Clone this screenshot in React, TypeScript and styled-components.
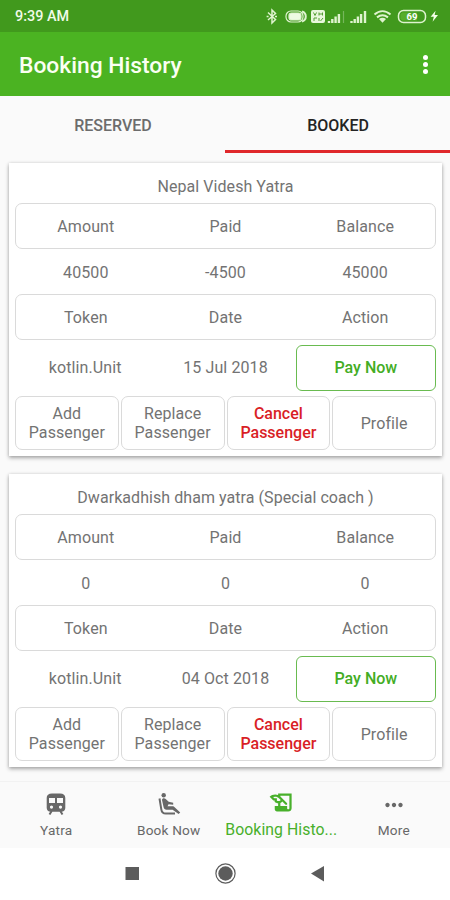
import React from "react";
import styled, { createGlobalStyle } from "styled-components";
import { MdHistoryEdu, MdMoreHoriz } from "react-icons/md";

const GlobalStyle = createGlobalStyle`
  * { box-sizing: border-box; }
  body { margin: 0; background: #fff; font-family: Roboto, "Liberation Sans", sans-serif; }
`;

const Screen = styled.div`
  width: 450px;
  height: 900px;
  display: flex;
  flex-direction: column;
  overflow: hidden;
  background: #fafafa;
  color: #737373;
`;

const StatusBar = styled.div`
  height: 32px;
  flex: none;
  display: flex;
  align-items: center;
  justify-content: space-between;
  padding: 0 9px 0 15px;
  background: #41991d;
  color: #f1fbe8;
`;

const Clock = styled.span`
  font-size: 14.4px;
  font-weight: 500;
  line-height: 16px;
  padding-top: 1px;
`;

const AppBar = styled.header`
  height: 64px;
  flex: none;
  display: flex;
  align-items: center;
  justify-content: space-between;
  padding: 0 22px 0 19px;
  background: #4bb322;
  color: #fafff2;
`;

const Title = styled.h1`
  margin: 3px 0 0;
  font-size: 22.8px;
  font-weight: 500;
  line-height: 28px;
`;

const Overflow = styled.div`
  display: flex;
  flex-direction: column;
  gap: 2px;
`;

const Dot = styled.i`
  width: 5px;
  height: 5px;
  border-radius: 50%;
  background: #fff;
`;

const Tabs = styled.div`
  height: 57px;
  flex: none;
  display: grid;
  grid-template-columns: 1fr 1fr;
`;

const Tab = styled.div<{ $active?: boolean }>`
  display: flex;
  align-items: center;
  justify-content: center;
  padding: 5px 0 0 1px;
  border-bottom: 3px solid ${(p) => (p.$active ? "#e0282b" : "transparent")};
  color: ${(p) => (p.$active ? "#242424" : "#6c6c6c")};
  font-size: 16px;
  font-weight: 500;
`;

const Cards = styled.main`
  flex: 1;
  display: flex;
  flex-direction: column;
  gap: 18px;
  padding: 10px 8px 0 9px;
`;

const Card = styled.section`
  height: 293px;
  flex: none;
  padding: 0 6px;
  background: #fff;
  box-shadow: 0 2px 4px rgba(0, 0, 0, 0.32), 0 0 3px rgba(0, 0, 0, 0.12);
`;

const CardTitle = styled.div`
  height: 40px;
  padding-top: 14px;
  text-align: center;
  font-size: 16px;
  line-height: 20px;
  letter-spacing: 0.06px;
`;

const Row = styled.div<{ $boxed?: boolean; $height: number }>`
  height: ${(p) => p.$height}px;
  display: grid;
  grid-template-columns: repeat(3, 1fr);
  align-items: center;
  text-align: center;
  border: 1.5px solid ${(p) => (p.$boxed ? "#dadada" : "transparent")};
  border-radius: 7px;
  font-size: 16px;
  letter-spacing: 0.1px;
`;

const ValueRow = styled(Row)`
  padding-top: 1px;
`;

const PayRow = styled(Row)`
  border: 0;
  margin-top: 4px;
`;

const PayButton = styled.button`
  height: 46px;
  padding: 0;
  border: 1.5px solid #69bb50;
  border-radius: 6px;
  background: #fff;
  color: #43ad25;
  font: 500 16px Roboto, sans-serif;
`;

const Actions = styled.div`
  display: grid;
  grid-template-columns: repeat(4, 1fr);
  gap: 2px;
  margin-top: 5px;
`;

const ActionButton = styled.button<{ $danger?: boolean }>`
  height: 54px;
  padding: 0 6px;
  border: 1.5px solid #dadada;
  border-radius: 7px;
  background: #fff;
  color: ${(p) => (p.$danger ? "#d91e26" : "#737373")};
  font: ${(p) => (p.$danger ? 500 : 400)} 16px/19px Roboto, sans-serif;
  letter-spacing: ${(p) => (p.$danger ? 0 : 0.08)}px;
`;

const BottomNav = styled.nav`
  height: 67px;
  flex: none;
  display: grid;
  grid-template-columns: repeat(4, 1fr);
  border-top: 1px solid #f2f2f2;
  background: #fafafa;
`;

const NavItem = styled.div<{ $active?: boolean }>`
  display: flex;
  flex-direction: column;
  align-items: center;
  padding-top: ${(p) => (p.$active ? 7 : 10)}px;
  gap: ${(p) => (p.$active ? 5 : 4)}px;
  color: ${(p) => (p.$active ? "#48b02b" : "#686868")};
  font-size: ${(p) => (p.$active ? 15.8 : 13.6)}px;
  line-height: ${(p) => (p.$active ? 18 : 16)}px;
  letter-spacing: ${(p) => (p.$active ? 0.05 : 0.2)}px;
  white-space: nowrap;
`;

const SystemNav = styled.footer`
  height: 52px;
  flex: none;
  display: flex;
  justify-content: center;
  background: #fff;
`;

const bookings = [
  { name: "Nepal Videsh Yatra", amounts: ["40500", "-4500", "45000"], date: "15 Jul 2018" },
  { name: "Dwarkadhish dham yatra (Special coach )", amounts: ["0", "0", "0"], date: "04 Oct 2018" },
];

function StatusIcons() {
  return (
    <svg width="176" height="20" viewBox="265 6 176 20" fill="none" stroke="#dff3cf" strokeWidth="1.2">
      <path d="M268 12.5l7.5 7-3.5 3.5V10l3.5 3.5-7.5 6.5M266.6 16.4h2M275 16.4h2" strokeWidth="1.5" />
      <rect x="286" y="11" width="17" height="11" rx="5" />
      <rect x="289" y="13" width="12" height="7" rx="2.5" fill="#eefbe4" />
      <path d="M302 11.5a5.2 5.2 0 010 10" strokeWidth="2" />
      <rect x="311" y="10" width="14" height="13" rx="2" fill="#e8f7dc" stroke="none" />
      <path d="M313.5 12.5l1.5 3 1.5-3M319 12.5v3m0-1.5h3.5m0-1.5v3M314 21v-3h3m2 3v-3m4 0l-2.5 3" stroke="#559e37" strokeWidth="1" />
      <path d="M329 23v-2M332.3 23v-4M335.6 23v-6.5M338.9 23v-9M351.5 23v-2M354.7 23v-4M357.9 23v-6.5M361.1 23v-9M365 23V11" strokeWidth="2.4" />
      <path d="M343.5 23V11" stroke="#76b65b" />
      <path d="M374.5 14.5c5-4.5 11-4.5 16 0M377 17.4c3.7-3 7.3-3 11 0" strokeWidth="2" />
      <path d="M379 19c2.4-1.6 4.6-1.6 7 0l-3.5 3.8z" fill="#dff3cf" stroke="none" />
      <rect x="398.5" y="10.5" width="27" height="12" rx="5" strokeWidth="1.5" />
      <path d="M402 12.5h15v8h-15l-1.5-2v-4z" fill="#56ad2b" stroke="none" />
      <text x="412" y="20" fill="#fff" stroke="none" fontFamily="Roboto" fontSize="9.5" fontWeight="700" textAnchor="middle">69</text>
      <path d="M435.6 10.8l-5 6h3.2l-1.2 5 5.4-6.8h-3.4z" fill="#f6ffe9" stroke="none" />
    </svg>
  );
}

function TrainIcon() {
  return (
    <svg width="26" height="26" viewBox="0 0 26 26" fill="currentColor">
      <path fillRule="evenodd" d="M9 1.5h8c3.5 0 5.3 1.6 5.3 4.5v10c0 2.3-1.8 3.8-3.8 3.8h-11C5.500 19.800 3.700 18.300 3.700 16V6c0-2.900 1.800-4.500 5.300-4.500zM6 6v5h6V6zm8 0v5h6V6zM8.500 13.500a1.600 1.600 0 100 3.200 1.600 1.600 0 000-3.200zm9 0a1.600 1.600 0 100 3.200 1.600 1.600 0 000-3.200z" />
      <path d="M8.7 19l-2.2 3.5M17.3 19l2.2 3.5" stroke="currentColor" strokeWidth="2" fill="none" />
    </svg>
  );
}

function SeatIcon() {
  return (
    <svg width="26" height="26" viewBox="0 0 26 26" fill="none" stroke="currentColor">
      <circle cx="7.7" cy="3.3" r="2.2" fill="currentColor" stroke="none" />
      <path d="M3.5 6.5l1.8 10.8c.4 2.8 1.900 4.200 4.500 4.200h9.200" strokeWidth="2" />
      <path d="M6 8c0-2 2.600-2.200 3.700-1l3 2.700 4.500 1.100v2l-4.600-.5-1.100 2h4.700c1.300 0 2 .5 2.700 1.300l5.300 5-1.600 1.500-6-4.300H10.500c-1.500 0-2.600-1-2.900-2.500z" fill="currentColor" stroke="none" />
    </svg>
  );
}

function SystemIcons() {
  return (
    <svg width="450" height="52" viewBox="0 848 450 52">
      <rect x="125.5" y="867" width="13.5" height="13" fill="#5c5c5c" />
      <circle cx="225.5" cy="873.5" r="9.6" fill="#fff" stroke="#5c5c5c" strokeWidth="1.2" />
      <circle cx="225.5" cy="873.5" r="7.2" fill="#5c5c5c" />
      <path d="M311 873.5l13-7.5v15.5z" fill="#5c5c5c" />
    </svg>
  );
}

export default function App() {
  return (
    <>
      <GlobalStyle />
      <Screen>
        <StatusBar>
          <Clock>9:39 AM</Clock>
          <StatusIcons />
        </StatusBar>
        <AppBar>
          <Title>Booking History</Title>
          <Overflow><Dot /><Dot /><Dot /></Overflow>
        </AppBar>
        <Tabs>
          <Tab>RESERVED</Tab>
          <Tab $active>BOOKED</Tab>
        </Tabs>
        <Cards>
          {bookings.map((b) => (
            <Card key={b.name}>
              <CardTitle>{b.name}</CardTitle>
              <Row $boxed $height={46}><span>Amount</span><span>Paid</span><span>Balance</span></Row>
              <ValueRow $height={45}>{b.amounts.map((a, i) => <span key={i}>{a}</span>)}</ValueRow>
              <Row $boxed $height={46}><span>Token</span><span>Date</span><span>Action</span></Row>
              <PayRow $height={47}>
                <span>kotlin.Unit</span><span>{b.date}</span><PayButton>Pay Now</PayButton>
              </PayRow>
              <Actions>
                <ActionButton>Add Passenger</ActionButton>
                <ActionButton>Replace Passenger</ActionButton>
                <ActionButton $danger>Cancel Passenger</ActionButton>
                <ActionButton>Profile</ActionButton>
              </Actions>
            </Card>
          ))}
        </Cards>
        <BottomNav>
          <NavItem><TrainIcon /><span>Yatra</span></NavItem>
          <NavItem><SeatIcon /><span>Book Now</span></NavItem>
          <NavItem $active><MdHistoryEdu size={27} /><span>Booking Histo...</span></NavItem>
          <NavItem><MdMoreHoriz size={26} /><span>More</span></NavItem>
        </BottomNav>
        <SystemNav><SystemIcons /></SystemNav>
      </Screen>
    </>
  );
}
